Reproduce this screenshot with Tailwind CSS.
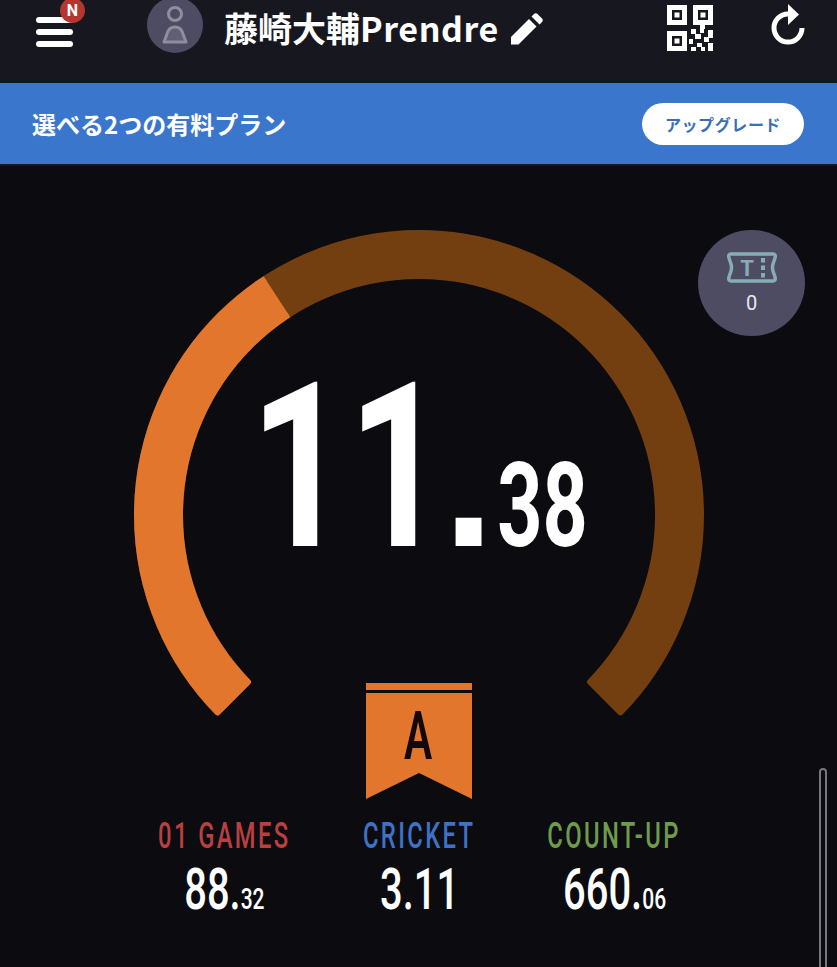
<!DOCTYPE html>
<html>
    <head>
        <title>Rating</title>
        <script src="https://cdn.jsdelivr.net/npm/@tailwindcss/browser@4"></script>
    </head>
    <body class="bg-[#0b0b10] overflow-hidden font-['Roboto',sans-serif]">
        <div class="relative w-[837px] h-[967px] overflow-hidden">
            <!-- header -->
            <header class="flex items-start h-[83px] bg-[#17181f] border-b-[3px] border-[#0f1626]">
                <div class="relative w-[37px] ml-[36px] mt-[17px] shrink-0 flex flex-col gap-[6px]">
                    <span class="h-[6px] rounded-full bg-white"></span>
                    <span class="h-[6px] rounded-full bg-white"></span>
                    <span class="h-[6px] rounded-full bg-white"></span>
                    <span class="absolute left-[24px] top-[-19px] w-[25px] h-[25px] rounded-full bg-[#b5352f] text-white text-[16px] font-bold flex items-center justify-center">N</span>
                </div>
                <div class="ml-[74px] mt-[-3px] w-[56px] h-[56px] rounded-full bg-[#4d4c63] flex items-center justify-center shrink-0">
                    <svg width="26" height="38" viewBox="0 0 26 38" fill="none" stroke="#8f8e9f" stroke-width="3">
                        <circle cx="13" cy="8" r="6.500" />
                        <path d="M13 21c5 0 7 3 8 7l3 8H2l3-8c1-4 3-7 8-7z" fill="#605f75" stroke-linejoin="round" />
                    </svg>
                </div>
                <div class="ml-[21px] mt-[4px] w-[280px] shrink-0 text-white text-[34px] leading-[48px] font-bold font-['Noto_Sans_CJK_JP',sans-serif] whitespace-nowrap">藤崎大輔<span class="tracking-[.6px]">Prendre</span></div>
                <svg class="ml-[7px] mt-[13px] shrink-0" width="32" height="32" viewBox="0 0 32 32" fill="#fff">
                    <path d="M0 31.500V24L18 6l7.500 7.500L7.500 31.500zM20.500 3.500l2.500-2.500c1-1 2.500-1 3.500 0l4.500 4.500c1 1 1 2.500 0 3.500l-2.500 2.500z" />
                </svg>
                <svg class="ml-[124px] mt-[5px] shrink-0" width="46" height="46" viewBox="0 0 46 46" fill="#fff">
                    <path fill-rule="evenodd" d="M0 0h20v20H0zM5 5v10h10V5zM26 0h20v20H26zM31 5v10h10V5zM0 26h20v20H0zM5 31v10h10V31z" />
                    <path d="M7.500 7.500h5v5h-5zM33.500 7.500h5v5h-5zM7.500 33.500h5v5h-5zM33 20h5v4h-5zM24 24h5v5h-5zM33 24h4v4h-4zM41 25h5v8h-5zM28 29h6v5h-6zM22 34h4v5h-4zM37 32h5v5h-5zM30 38h5v4h-5zM41 38h5v8h-5zM24 42h5v4h-5zM34 42h4v4h-4z" />
                </svg>
                <svg class="ml-[57px] mt-[3px] shrink-0" width="36" height="44" viewBox="0 0 36 44" fill="none" stroke="#fff" stroke-width="5">
                    <path d="M32 25A14 14 0 1 1 18 11" />
                    <path d="M18 1l11 10.500L18 22z" fill="#fff" stroke="none" />
                </svg>
            </header>

            <!-- upgrade banner -->
            <div class="flex items-center justify-between h-[83px] pl-[32px] pr-[33px] bg-[#3a76cc] border-b-2 border-[#0d1a30]">
                <span class="text-white text-[24px] font-bold font-['Noto_Sans_CJK_JP',sans-serif]">選べる2つの有料プラン</span>
                <span class="flex items-center justify-center w-[162px] h-[42px] rounded-full bg-white text-[#3a6fb5] text-[16px] font-bold tracking-[.6px] font-['Noto_Sans_CJK_JP',sans-serif]">アップグレード</span>
            </div>

            <!-- gauge -->
            <main class="flex flex-col items-center pt-[64px]">
                <div class="relative w-[570px] h-[453px] shrink-0">
                    <svg class="absolute top-0 left-0 overflow-visible" width="570" height="490" viewBox="0 0 570 490">
                        <defs>
                            <clipPath id="scorePart">
                                <path d="M285 285L67-50H-50V600H285z" />
                            </clipPath>
                        </defs>
                        <path d="M83.600 482.400A282 282 0 1 1 486.400 482.400L456 452A239 239 0 1 0 114 452z" fill="#733f10" stroke="#733f10" stroke-width="6" stroke-linejoin="round" />
                        <path clip-path="url(#scorePart)" d="M83.600 482.400A282 282 0 1 1 486.400 482.400L456 452A239 239 0 1 0 114 452z" fill="#e2762c" stroke="#e2762c" stroke-width="6" stroke-linejoin="round" />
                    </svg>
                    <div class="absolute left-0 right-0 top-[102px] flex justify-center">
                        <div class="scale-x-[.74] whitespace-nowrap text-white font-bold leading-[270px] text-[231px]">11<span class="inline-block ml-[4px] scale-x-[1.3] text-[190px] font-['Liberation_Sans',sans-serif]">.</span><span class="inline-block origin-left ml-[12px] scale-x-[.92] mr-[-12px] text-[116px]">38</span></div>
                    </div>
                </div>

                <div class="relative w-[106px] h-[116px] shrink-0">
                    <svg class="absolute inset-0" width="106" height="116" viewBox="0 0 106 116" fill="#e2762c">
                        <path d="M0 0h106v7H0zM0 10h106v106L53 90 0 116z" />
                    </svg>
                    <div class="absolute left-0 right-0 top-[15px] flex justify-center">
                        <span class="scale-x-[.64] text-[#14090a] text-[66px] leading-[78px] font-semibold">A</span>
                    </div>
                </div>

                <div class="flex mt-[16px] ml-[18px] w-[600px]">
                    <div class="w-[194px] flex flex-col items-center">
                        <div class="scale-x-[.66] whitespace-nowrap text-[#b8403f] text-[36px] leading-[43px] font-medium tracking-[3.6px]">01 GAMES</div>
                        <div class="scale-x-[.7] whitespace-nowrap text-white text-[57px] leading-[64px] font-medium">88.<span class="text-[30px]">32</span></div>
                    </div>
                    <div class="w-[196px] flex flex-col items-center">
                        <div class="scale-x-[.66] whitespace-nowrap text-[#3f72c4] text-[36px] leading-[43px] font-medium tracking-[3.6px]">CRICKET</div>
                        <div class="scale-x-[.7] whitespace-nowrap text-white text-[57px] leading-[64px] font-medium">3.11</div>
                    </div>
                    <div class="w-[194px] flex flex-col items-center">
                        <div class="scale-x-[.66] whitespace-nowrap text-[#6f9b4a] text-[36px] leading-[43px] font-medium tracking-[3.6px]">COUNT-UP</div>
                        <div class="scale-x-[.7] whitespace-nowrap text-white text-[57px] leading-[64px] font-medium">660.<span class="text-[30px]">06</span></div>
                    </div>
                </div>
            </main>

            <!-- ticket badge -->
            <div class="absolute left-[698px] top-[230px] w-[107px] h-[106px] rounded-full bg-[#4d4c63] flex flex-col items-center pt-[22px]">
                <svg width="52" height="31" viewBox="0 0 52 31" fill="none" stroke="#86adb5" stroke-width="3.500" stroke-linejoin="round">
                    <path d="M5 2H47Q50 2 49 6L47 12Q46 15.500 47 19L49 25Q50 29 47 29H5Q2 29 3 25L5 19Q6 15.500 5 12L3 6Q2 2 5 2Z" />
                    <path d="M37 6v4.500M37 13.500v4.500M37 21v4.500" stroke-width="4" />
                    <text x="21" y="23.500" text-anchor="middle" font-size="22" font-weight="700" fill="#86adb5" stroke="none" font-family="Roboto">T</text>
                </svg>
                <span class="text-[#e8e8ec] text-[20px] leading-[24px] mt-[8px]">0</span>
            </div>

            <!-- scrollbar -->
            <div class="absolute left-[819px] top-[768px] w-[8px] h-[220px] rounded-full border-2 border-[#77777c]"></div>
        </div>
    </body>
</html>
